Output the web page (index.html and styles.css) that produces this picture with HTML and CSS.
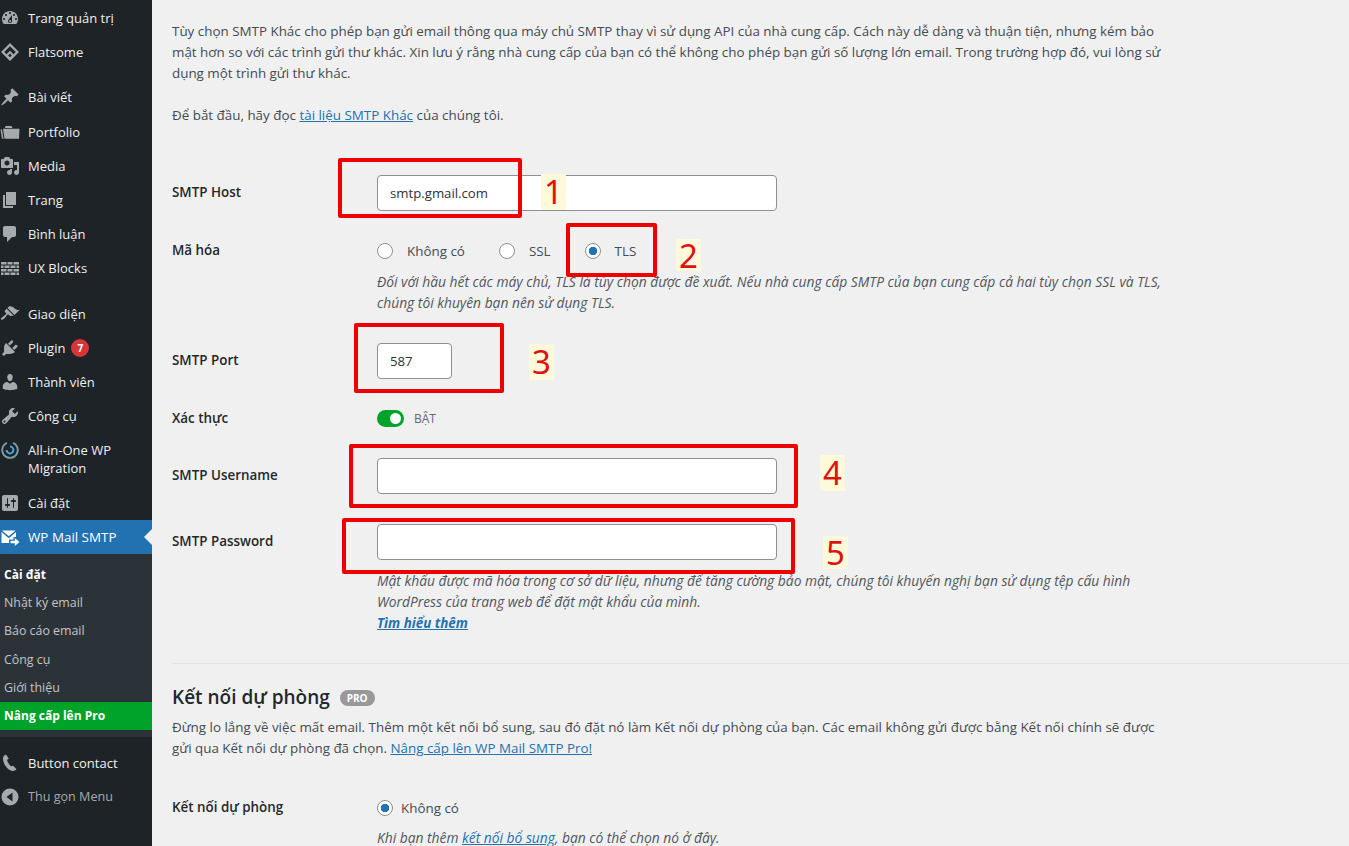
FILE: index.html
```html
<!DOCTYPE html>
<html lang="vi">
<head>
  <meta charset="UTF-8">
  <meta name="viewport" content="width=device-width, initial-scale=1.0">
  <title>WP Mail SMTP</title>
  <link rel="stylesheet" href="styles.css">
</head>
<body>
<div class="page">
  <nav class="sidebar">
    <ul class="menu">
      <li class="item"><svg class="icon" viewBox="0 0 20 20"><path d="M3.76 16h12.48c1.1-1.37 1.76-3.11 1.76-5 0-4.42-3.58-8-8-8s-8 3.58-8 8c0 1.89.66 3.63 1.76 5zM10 4c.55 0 1 .45 1 1s-.45 1-1 1-1-.45-1-1 .45-1 1-1zM6 6c.55 0 1 .45 1 1s-.45 1-1 1-1-.45-1-1 .45-1 1-1zm8 0c.55 0 1 .45 1 1s-.45 1-1 1-1-.45-1-1 .45-1 1-1zm-5.37 5.55L12 7v6c0 1.1-.9 2-2 2s-2-.9-2-2c0-.57.24-1.08.63-1.45zM4 10c.55 0 1 .45 1 1s-.45 1-1 1-1-.45-1-1 .45-1 1-1zm12 0c.55 0 1 .45 1 1s-.45 1-1 1-1-.45-1-1 .45-1 1-1zm-5 3c0-.55-.45-1-1-1s-1 .45-1 1 .45 1 1 1 1-.45 1-1z"/></svg>Trang quản trị</li>
      <li class="item"><svg class="icon" viewBox="0 0 20 20"><path fill-rule="evenodd" d="M10 1l9 9-9 9-9-9zM10 4.2L4.2 10l2.3 2.3L10 8.8l3.5 3.5 2.3-2.3zM10 11.6L8.2 13.4 10 15.2l1.8-1.8z"/></svg>Flatsome</li>
      <li class="item sep item-gap"><svg class="icon" viewBox="0 0 20 20"><path d="M10.44 3.02l1.82-1.82 6.36 6.35-1.83 1.82c-1.05-.68-2.48-.57-3.41.36l-.75.75c-.92.93-1.04 2.35-.35 3.41l-1.83 1.82-2.41-2.41-2.8 2.79c-.42.42-3.38 2.71-3.8 2.29s1.86-3.39 2.28-3.81l2.79-2.79L4.1 9.36l1.83-1.82c1.05.69 2.48.57 3.4-.36l.75-.75c.93-.92 1.05-2.35.36-3.41z"/></svg>Bài viết</li>
      <li class="item"><svg class="icon" viewBox="0 0 20 20"><path d="M5.5 4h6l1 2H5zM3 6.800h16.500l-.5 10H4.500zM.5 7.500h1.500l1.500 9.300H2z"/></svg>Portfolio</li>
      <li class="item"><svg class="icon" viewBox="0 0 20 20"><path d="M13 11V4c0-.55-.45-1-1-1h-1.670L9 1H5L3.670 3H2c-.55 0-1 .45-1 1v7c0 .55.45 1 1 1h10c.55 0 1-.45 1-1zM7 4.500c1.380 0 2.500 1.120 2.500 2.500S8.380 9.500 7 9.500 4.500 8.380 4.500 7 5.620 4.500 7 4.500zM14 6h5v10.500c0 1.380-1.120 2.500-2.500 2.500S14 17.880 14 16.500s1.120-2.500 2.500-2.500c.17 0 .34.02.5.05V9h-3V6zm-4 8.050V13h2v3.500c0 1.380-1.120 2.500-2.500 2.500S7 17.880 7 16.500 8.120 14 9.500 14c.17 0 .34.02.5.05z"/></svg>Media</li>
      <li class="item"><svg class="icon" viewBox="0 0 20 20"><path d="M6 15V2h10v13H6zm-1 1h8v2H3V5h2v11z"/></svg>Trang</li>
      <li class="item"><svg class="icon" viewBox="0 0 20 20"><path d="M5 2h9c1.100 0 2 .9 2 2v7c0 1.100-.9 2-2 2h-2l-5 5v-5H5c-1.100 0-2-.9-2-2V4c0-1.100.9-2 2-2z"/></svg>Bình luận</li>
      <li class="item"><svg class="icon" viewBox="0 0 20 20"><path d="M1 4h5.500v2.500H1zM7.500 4h5v2.500h-5zM13.500 4H19v2.500h-5.500zM1 7.500h2.500V10H1zM4.500 7.500h5V10h-5zM10.500 7.500h5V10h-5zM16.500 7.500H19V10h-2.500zM1 11h5.500v2.500H1zM7.500 11h5v2.500h-5zM13.500 11H19v2.500h-5.500zM1 14.500h2.500V17H1zM4.500 14.500h5V17h-5zM10.500 14.500h5V17h-5zM16.500 14.500H19V17h-2.500z"/></svg>UX Blocks</li>
      <li class="item sep sep-wide"><svg class="icon" viewBox="0 0 20 20"><path d="M14.480 11.060L7.410 3.990l1.500-1.500c.5-.56 2.300-.47 3.510.32 1.210.8 1.430 1.280 2.910 2.100 1.180.64 2.450 1.260 4.450.85zm-.71.71L6.700 4.700 4.930 6.470c-.39.39-.39 1.020 0 1.410l1.060 1.060c.39.39.39 1.030 0 1.420-.6.6-1.430 1.110-2.210 1.690-.35.26-.7.53-1.010.84C1.430 13.230.4 14.890 1.100 15.600c.7.7 2.350-.32 3.700-1.670.31-.31.58-.66.85-1.020.57-.78 1.080-1.610 1.690-2.210.39-.39 1.020-.39 1.410 0l1.060 1.060c.39.39 1.020.39 1.410 0z"/></svg>Giao diện</li>
      <li class="item"><svg class="icon" viewBox="0 0 20 20"><path d="M13.110 4.360L9.870 7.600 8 5.730l3.240-3.240c.35-.34 1.050-.2 1.560.32.52.51.66 1.210.31 1.550zm-8 1.770l.91-1.120 9.010 9.010-1.190.84c-.71.71-2.630 1.160-3.820 1.160H6.140L4.900 17.260c-.59.59-1.540.59-2.120 0-.59-.58-.59-1.530 0-2.120l1.240-1.240v-3.880c0-1.130.4-3.190 1.090-3.890zm7.260 3.970l3.240-3.240c.34-.35 1.040-.21 1.550.31.52.51.66 1.210.31 1.550l-3.240 3.250z"/></svg>Plugin<span class="badge">7</span></li>
      <li class="item"><svg class="icon" viewBox="0 0 20 20"><path d="M10 9.250c-2.270 0-2.730-3.440-2.730-3.440C7 4.020 7.820 2 9.970 2c2.160 0 2.980 2.020 2.710 3.810 0 0-.41 3.440-2.680 3.440zm0 2.570L12.720 10c2.390 0 4.520 2.330 4.520 4.530v2.490s-3.650 1.130-7.240 1.130c-3.650 0-7.240-1.130-7.240-1.130v-2.490c0-2.250 1.940-4.480 4.470-4.480z"/></svg>Thành viên</li>
      <li class="item"><svg class="icon" viewBox="0 0 20 20"><path d="M16.680 9.770c-1.340 1.340-3.300 1.670-4.950.99l-5.410 6.520c-.99.99-2.590.99-3.580 0s-.99-2.590 0-3.570l6.520-5.420c-.68-1.650-.35-3.610.99-4.950 1.280-1.280 3.120-1.620 4.720-1.060l-2.890 2.890 2.820 2.820 2.860-2.870c.53 1.580.18 3.390-1.080 4.650zM3.810 16.210c.4.39 1.040.39 1.430 0 .4-.4.4-1.040 0-1.430-.39-.4-1.030-.4-1.430 0-.39.39-.39 1.030 0 1.430z"/></svg>Công cụ</li>
      <li class="item tall"><svg class="icon" viewBox="0 0 20 20"><path class="aio-ring" d="M7 2.900A7.800 7.800 0 1 0 13 2.900"/><path class="aio-inner" d="M6.600 10a3.400 3.400 0 1 0 3.400-3.400"/></svg>All-in-One WP<br>Migration</li>
      <li class="item"><svg class="icon" viewBox="0 0 20 20"><path d="M18 16V4c0-1.100-.9-2-2-2H4c-1.100 0-2 .9-2 2v12c0 1.100.9 2 2 2h12c1.100 0 2-.9 2-2zM8 11h1c.55 0 1 .45 1 1s-.45 1-1 1H8v1.500c0 .28-.22.5-.5.5s-.5-.22-.5-.5V13H6c-.55 0-1-.45-1-1s.45-1 1-1h1V5.500c0-.28.22-.5.5-.5s.5.22.5.5V11zm5-2h-1c-.55 0-1-.45-1-1s.45-1 1-1h1V5.500c0-.28.22-.5.5-.5s.5.22.5.5V7h1c.55 0 1 .45 1 1s-.45 1-1 1h-1v5.500c0 .28-.22.5-.5.5s-.5-.22-.5-.5V9z"/></svg>Cài đặt</li>
      <li class="item current"><svg class="icon" viewBox="0 0 20 20"><path d="M2 3.500h13.500L8.800 9.300zM1.500 5l7.300 6.200L16 5v5h-2.500v2.500H9V16H1.500zM14.800 11v2.800H10.500v2.500h4.300V19l4.700-4z"/></svg>WP Mail SMTP</li>
    </ul>
    <ul class="submenu">
      <li class="sub-item active">Cài đặt</li>
      <li class="sub-item">Nhật ký email</li>
      <li class="sub-item">Báo cáo email</li>
      <li class="sub-item">Công cụ</li>
      <li class="sub-item">Giới thiệu</li>
      <li class="sub-item upgrade">Nâng cấp lên Pro</li>
    </ul>
    <ul class="menu after-sub">
      <li class="item"><svg class="icon" viewBox="0 0 20 20"><path d="M6 1.500c-1.300.3-2.800 1.700-3 3.500-.3 3 1.200 6.500 3.300 9 1.700 2 3.900 3.700 6 4 1.500.2 3.300-.5 4.200-1.700l-3.400-3.500c-.6.3-1.300.6-1.900.4-1.800-1.200-3.700-4-4.200-6.300.4-.5 1.100-.8 1.800-1.100z"/></svg>Button contact</li>
      <li class="item collapse"><svg class="icon" viewBox="0 0 20 20"><path d="M10 1.500a8.500 8.500 0 1 0 0 17 8.500 8.500 0 0 0 0-17zM12.500 14.500L6.500 10l6-4.500z"/></svg>Thu gọn Menu</li>
    </ul>
  </nav>

  <main class="content">
    <p class="intro">Tùy chọn SMTP Khác cho phép bạn gửi email thông qua máy chủ SMTP thay vì sử dụng API của nhà cung cấp. Cách này dễ dàng và thuận tiện, nhưng kém bảo<br>mật hơn so với các trình gửi thư khác. Xin lưu ý rằng nhà cung cấp của bạn có thể không cho phép bạn gửi số lượng lớn email. Trong trường hợp đó, vui lòng sử<br>dụng một trình gửi thư khác.</p>
    <p class="intro intro-next">Để bắt đầu, hãy đọc <a href="#">tài liệu SMTP Khác</a> của chúng tôi.</p>

    <div class="settings">
      <div class="row">
        <label class="row-label label-field">SMTP Host</label>
        <div><input class="field" type="text" value="smtp.gmail.com"></div>
      </div>
      <div class="row">
        <label class="row-label">Mã hóa</label>
        <div>
          <div class="radios">
            <label class="radio-item"><input type="radio" name="enc">Không có</label>
            <label class="radio-item"><input type="radio" name="enc">SSL</label>
            <label class="radio-item"><input type="radio" name="enc" checked>TLS</label>
          </div>
          <p class="desc">Đối với hầu hết các máy chủ, TLS là tùy chọn được đề xuất. Nếu nhà cung cấp SMTP của bạn cung cấp cả hai tùy chọn SSL và TLS,<br>chúng tôi khuyên bạn nên sử dụng TLS.</p>
        </div>
      </div>
      <div class="row">
        <label class="row-label label-field">SMTP Port</label>
        <div><input class="field field-small" type="text" value="587"></div>
      </div>
      <div class="row">
        <label class="row-label">Xác thực</label>
        <div class="toggle-wrap"><span class="toggle"></span><span class="toggle-text">BẬT</span></div>
      </div>
      <div class="row">
        <label class="row-label label-field">SMTP Username</label>
        <div><input class="field" type="text"></div>
      </div>
      <div class="row row-password">
        <label class="row-label label-field">SMTP Password</label>
        <div>
          <input class="field" type="password">
          <p class="desc">Mật khẩu được mã hóa trong cơ sở dữ liệu, nhưng để tăng cường bảo mật, chúng tôi khuyến nghị bạn sử dụng tệp cấu hình<br>WordPress của trang web để đặt mật khẩu của mình.<br><a class="more" href="#">Tìm hiểu thêm</a></p>
        </div>
      </div>
    </div>

    <section class="backup">
      <h2 class="backup-title">Kết nối dự phòng <span class="pro">PRO</span></h2>
      <p class="intro">Đừng lo lắng về việc mất email. Thêm một kết nối bổ sung, sau đó đặt nó làm Kết nối dự phòng của bạn. Các email không gửi được bằng Kết nối chính sẽ được<br>gửi qua Kết nối dự phòng đã chọn. <a href="#">Nâng cấp lên WP Mail SMTP Pro!</a></p>
      <div class="row backup-row">
        <label class="row-label">Kết nối dự phòng</label>
        <div>
          <label class="radio-item radio-tight"><input type="radio" name="backup" checked>Không có</label>
          <p class="desc desc-backup">Khi bạn thêm <a href="#">kết nối bổ sung</a>, bạn có thể chọn nó ở đây.</p>
        </div>
      </div>
    </section>
  </main>

  <!-- annotations drawn on top of the screenshot -->
  <div class="mark mark-1"></div>
  <div class="mark mark-2"></div>
  <div class="mark mark-3"></div>
  <div class="mark mark-4"></div>
  <div class="mark mark-5"></div>
  <span class="num num-1">1</span>
  <span class="num num-2">2</span>
  <span class="num num-3">3</span>
  <span class="num num-4">4</span>
  <span class="num num-5">5</span>
</div>
</body>
</html>
```

FILE: styles.css
```css
html, body {
  margin: 0;
  height: 846px;
  overflow: hidden;
}

body {
  font-family: "Open Sans", "Noto Sans", sans-serif;
  font-size: 13.4px;
  line-height: 21px;
  color: #444b52;
  background-color: #f0f0f1;
}

ul, p, h2 {
  margin: 0;
  padding: 0;
}

ul {
  list-style: none;
}

a {
  color: #2271b1;
}

.page {
  position: relative;
  display: flex;
  height: 846px;
  overflow: hidden;
}

/* sidebar */
.sidebar {
  flex: 0 0 152px;
  background-color: #1d2327;
  color: #f0f0f1;
  padding-top: 1px;
}

.item {
  position: relative;
  display: flex;
  align-items: center;
  height: 34px;
  padding-left: 28px;
  font-size: 13px;
  line-height: 18px;
  white-space: nowrap;
}

.item.sep {
  margin-top: 11px;
}

.item.sep-wide {
  margin-top: 12px;
}

.item.item-gap {
  margin-bottom: 1px;
}

.item.tall {
  height: 53px;
  display: block;
  padding-top: 8px;
  box-sizing: border-box;
}

.icon {
  position: absolute;
  left: 0;
  top: 7px;
  width: 20px;
  height: 20px;
  fill: #a7aaad;
}

.aio-ring {
  fill: none;
  stroke: #7d9aa8;
  stroke-width: 1.800;
}

.aio-inner {
  fill: none;
  stroke: #3fa9d8;
  stroke-width: 2;
}

.badge {
  width: 18px;
  height: 18px;
  margin-left: 6px;
  border-radius: 50%;
  background-color: #d63638;
  color: #fff;
  font-size: 10px;
  font-weight: 700;
  line-height: 18px;
  text-align: center;
}

.item.current {
  background-color: #2271b1;
  color: #fff;
  font-size: 13.4px;
}

.item.current .icon {
  fill: #fff;
}

.item.current::after {
  content: "";
  position: absolute;
  right: 0;
  top: 9px;
  border: 8px solid transparent;
  border-right-color: #f0f0f1;
  border-left-width: 0;
}

.submenu {
  background-color: #2c3338;
  padding: 7px 0 7px;
}

.sub-item {
  height: 28.2px;
  padding-left: 4px;
  font-size: 12.4px;
  line-height: 28px;
  color: #c3c4c7;
  white-space: nowrap;
}

.sub-item.active {
  color: #fff;
  font-size: 12px;
  font-weight: 700;
}

.sub-item.upgrade {
  background-color: #00a32a;
  color: #fff;
  font-size: 12px;
  font-weight: 700;
}

.after-sub {
  margin-top: 9px;
}

.item.collapse {
  color: #a7aaad;
  font-size: 12.6px;
}

/* main content */
.content {
  flex: 1;
  min-width: 0;
  padding: 21px 0 0 20px;
  white-space: nowrap;
}

.intro-next {
  margin-top: 21px;
}

.settings {
  display: flex;
  flex-direction: column;
  gap: 29px;
  margin-top: 49px;
}

.row {
  display: grid;
  grid-template-columns: 205px 1fr;
}

.row-password {
  margin-top: 1px;
}

.row-label {
  font-weight: 600;
  color: #23282c;
}

.label-field {
  padding-top: 7px;
}

.field {
  display: block;
  box-sizing: border-box;
  width: 400px;
  height: 36px;
  padding: 0 12px;
  border: 1px solid #8c8f94;
  border-radius: 4px;
  background-color: #fff;
  color: #2c3338;
  font-family: inherit;
  font-size: 13.2px;
}

.field-small {
  width: 75px;
}

.radios {
  display: flex;
  gap: 34px;
}

.radio-item {
  display: flex;
  align-items: center;
  height: 22px;
}

.radio-item input {
  appearance: none;
  box-sizing: border-box;
  width: 16px;
  height: 16px;
  margin: 0 14px 0 0;
  border: 1px solid #8c8f94;
  border-radius: 50%;
  background-color: #fff;
}

.radio-tight input {
  margin-right: 8px;
}

.radio-item input:checked {
  background: radial-gradient(circle, #2271b1 0 4px, #fff 4.500px);
}

.desc {
  margin-top: 10px;
  font-size: 13.8px;
  font-style: italic;
  color: #50575e;
}

.radios + .desc {
  margin-top: 9px;
  margin-bottom: 1px;
}

.desc-backup {
  margin-top: 10px;
  line-height: 17px;
}

.more {
  font-size: 13.4px;
  font-weight: 700;
}

.toggle-wrap {
  display: flex;
  align-items: center;
  gap: 10px;
}

.toggle {
  position: relative;
  width: 27px;
  height: 17px;
  border-radius: 9px;
  background-color: #00a32a;
}

.toggle::after {
  content: "";
  position: absolute;
  right: 3px;
  top: 3px;
  width: 11px;
  height: 11px;
  border-radius: 50%;
  background-color: #fff;
}

.toggle-text {
  font-size: 12px;
  color: #646970;
}

.backup {
  margin-top: 29px;
  padding-top: 20px;
  border-top: 1px solid #e4e4e6;
}

.backup-title {
  font-size: 19px;
  font-weight: 600;
  line-height: 26px;
  color: #23282c;
  margin-bottom: 7px;
}

.pro {
  display: inline-block;
  margin-left: 5px;
  padding: 0 7px;
  height: 16px;
  border-radius: 8px;
  background-color: #999;
  color: #fff;
  font-size: 10px;
  font-weight: 700;
  line-height: 16px;
  vertical-align: 2px;
}

.backup-row {
  margin-top: 38px;
}

/* annotations */
.mark {
  position: absolute;
  box-sizing: border-box;
  border: 4px solid #ee0000;
  border-radius: 2px;
}

.mark-1 { left: 338px; top: 158px; width: 184px; height: 60px; }
.mark-2 { left: 566px; top: 223px; width: 91px; height: 54px; }
.mark-3 { left: 354px; top: 323px; width: 150px; height: 70px; }
.mark-4 { left: 349px; top: 444px; width: 449px; height: 64px; }
.mark-5 { left: 342px; top: 518px; width: 453px; height: 56px; }

.num {
  position: absolute;
  width: 25px;
  height: 36px;
  background-color: #fdf9da;
  color: #e01010;
  font-family: "Noto Sans", sans-serif;
  font-size: 33px;
  line-height: 36px;
  text-align: center;
}

.num-1 { left: 541px; top: 174px; }
.num-2 { left: 676px; top: 239px; height: 30px; padding-top: 2px; line-height: 30px; }
.num-3 { left: 529px; top: 344px; }
.num-4 { left: 820px; top: 455px; }
.num-5 { left: 823px; top: 536px; height: 33px; line-height: 34px; }
```
